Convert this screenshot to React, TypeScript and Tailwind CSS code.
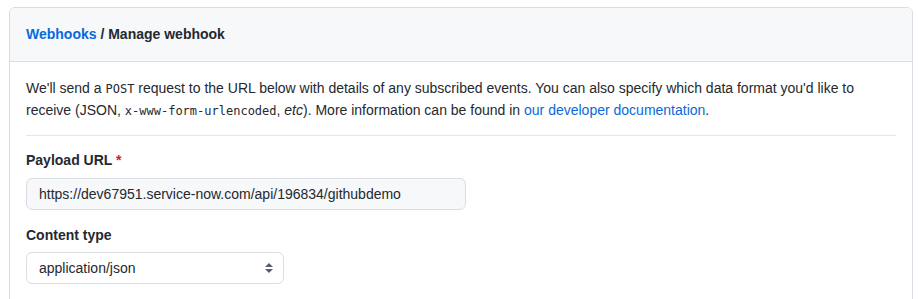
import React from "react";

export default function App() {
  return (
    <div className="bg-white w-[918px] h-[299px] overflow-hidden pl-[9px] pt-[7px]">
      <div
        className="w-[904px] border border-[#d8dee4] rounded-[6px] text-[#24292f] text-[14px] leading-[21px]"
        style={{ fontFamily: '"Liberation Sans", Arial, sans-serif' }}
      >
        <div className="bg-[#f6f8fa] border-b border-[#d8dee4] rounded-t-[6px] px-4 py-4 font-bold">
          <a className="text-[#0969da]">Webhooks</a>
          <span> / Manage webhook</span>
        </div>
        <div className="px-4 pt-4 pb-10">
          <p>
            We'll send a{" "}
            <code className="text-[12px]" style={{ fontFamily: '"DejaVu Sans Mono", monospace' }}>POST</code>{" "}
            request to the URL below with details of any subscribed events. You can also specify which data format you'd like to
            receive (JSON,{" "}
            <code className="text-[12px]" style={{ fontFamily: '"DejaVu Sans Mono", monospace' }}>x-www-form-urlencoded</code>,{" "}
            <em>etc</em>). More information can be found in{" "}
            <a className="text-[#0969da]">our developer documentation</a>.
          </p>
          <div className="h-px bg-[#e4e8ec] mt-[13px] mb-[14px]" />
          <div className="font-bold">
            Payload URL <span className="text-[#cf222e]">*</span>
          </div>
          <div className="mt-[7px] w-[440px] h-[32px] bg-[#f6f8fa] border border-[#d8dee4] rounded-[6px] px-3 flex items-center">
            https://dev67951.service-now.com/api/196834/githubdemo
          </div>
          <div className="font-bold mt-[15px]">Content type</div>
          <div className="mt-[6px] w-[258px] h-[32px] bg-white border border-[#d8dee4] rounded-[6px] pl-3 pr-[9px] flex items-center justify-between">
            <span>application/json</span>
            <svg width="10" height="14" viewBox="0 0 10 14">
              <path d="M5 2 L9 6 H1 Z" fill="#57606a" />
              <path d="M5 12 L9 8 H1 Z" fill="#57606a" />
            </svg>
          </div>
        </div>
      </div>
    </div>
  );
}
